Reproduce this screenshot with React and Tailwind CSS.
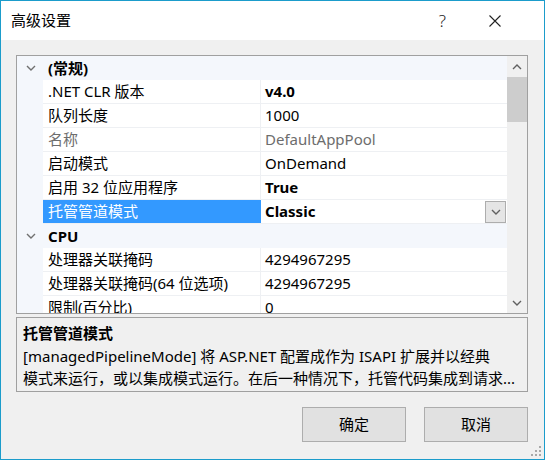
import React from "react";

const rows = [
  { cat: true, label: "(常规)" },
  { name: ".NET CLR 版本", value: "v4.0", bold: true },
  { name: "队列长度", value: "1000" },
  { name: "名称", value: "DefaultAppPool", gray: true },
  { name: "启动模式", value: "OnDemand" },
  { name: "启用 32 位应用程序", value: "True", bold: true },
  { name: "托管管道模式", value: "Classic", bold: true, selected: true },
  { cat: true, label: "CPU" },
  { name: "处理器关联掩码", value: "4294967295" },
  { name: "处理器关联掩码(64 位选项)", value: "4294967295" },
  { name: "限制(百分比)", value: "0" },
  { name: "限制操作", value: "NoAction" },
];

function Chevron({ up = false, className = "" }) {
  return (
    <svg width="10" height="6" viewBox="0 0 10 6" className={className}>
      <path
        d={up ? "M1 5 L5 1 L9 5" : "M1 1 L5 5 L9 1"}
        fill="none"
        stroke="currentColor"
        strokeWidth="1.4"
      />
    </svg>
  );
}

function CategoryRow({ label }) {
  return (
    <div className="flex h-[24px] items-center bg-[#f4f7fc]">
      <div className="flex w-[26px] justify-center pl-[1px] text-[#707070]">
        <Chevron />
      </div>
      <div className="pl-[5px] font-bold">{label}</div>
    </div>
  );
}

function PropRow({ row }) {
  return (
    <div className="flex h-[24px]">
      <div className="w-[26px] bg-[#f4f7fc]" />
      <div
        className={
          row.selected
            ? "flex w-[218px] items-center border-b border-[#eef0f3] bg-[#3399ff] pl-[5px] text-white"
            : "flex w-[218px] items-center border-b border-r border-[#eef0f3] pl-[5px]" +
              (row.gray ? " text-[#6d6d6d]" : "")
        }
      >
        <span className="whitespace-nowrap">{row.name}</span>
      </div>
      <div className="flex flex-1 items-center border-b border-[#eef0f3] pl-[4px]">
        <span
          className={
            (row.bold ? "font-bold " : "") +
            (row.gray ? "text-[#6d6d6d] " : "") +
            "whitespace-nowrap"
          }
        >
          {row.value}
        </span>
        {row.selected && (
          <div className="ml-auto mr-[1px] flex h-[22px] w-[21px] items-center justify-center border border-[#adadad] bg-[#e5e5e5] text-[#606060]">
            <Chevron />
          </div>
        )}
      </div>
    </div>
  );
}

export default function App() {
  return (
    <div className="h-[461px] w-[545px] bg-white font-['Noto_Sans','Noto_Sans_CJK_SC',sans-serif] text-[15px] text-black">
      <div className="relative flex h-[460px] w-[545px] flex-col border border-[#1b9ccb]">
        {/* title bar */}
        <div className="flex h-[39px] items-center bg-white pl-[10px] pr-[43px]">
          <span className="text-[15px]">高级设置</span>
          <div className="ml-auto flex items-center gap-[43px]">
            <span className="text-[17px] font-light text-[#222]">?</span>
            <svg width="12" height="12" viewBox="0 0 12 12">
              <path d="M0.5 0.5 L11.5 11.5 M11.5 0.5 L0.5 11.5" stroke="#222" strokeWidth="1.1" />
            </svg>
          </div>
        </div>

        {/* body */}
        <div className="flex flex-1 flex-col bg-[#f0f0f0] px-[15px] pt-[15px]">
          <div className="flex h-[259px] w-[512px] border border-[#a0a0a0] bg-white">
            <div className="flex-1 overflow-hidden">
              {rows.map((r, i) =>
                r.cat ? <CategoryRow key={i} label={r.label} /> : <PropRow key={i} row={r} />
              )}
            </div>
            <div className="flex w-[20px] flex-col bg-[#f0f0f0]">
              <div className="flex h-[21px] items-center justify-center text-[#606060]">
                <Chevron up />
              </div>
              <div className="h-[45px] bg-[#cdcdcd]" />
              <div className="flex-1" />
              <div className="flex h-[21px] items-center justify-center text-[#606060]">
                <Chevron />
              </div>
            </div>
          </div>

          <div className="mt-[3px] h-[75px] w-[512px] overflow-hidden border border-[#a0a0a0] bg-[#f0f0f0] pl-[6px] pt-[4px] leading-[22.5px]">
            <div className="font-bold">托管管道模式</div>
            <div className="whitespace-nowrap">
              [managedPipelineMode] 将 ASP.NET 配置成作为 ISAPI 扩展并以经典
            </div>
            <div className="whitespace-nowrap">
              模式来运行，或以集成模式运行。在后一种情况下，托管代码集成到请求...
            </div>
          </div>

          <div className="mt-[15px] flex justify-end gap-[18px] pr-[1px]">
            <button className="flex h-[35px] w-[104px] items-center justify-center border border-[#adadad] bg-[#e1e1e1]">
              确定
            </button>
            <button className="flex h-[35px] w-[104px] items-center justify-center border border-[#adadad] bg-[#e1e1e1]">
              取消
            </button>
          </div>
        </div>

        {/* size grip */}
        <svg width="10" height="10" viewBox="0 0 10 10" className="absolute bottom-[3px] right-[3px]">
          <rect x="8" y="0" width="2" height="2" fill="#a8a8a8" />
          <rect x="4" y="4" width="2" height="2" fill="#a8a8a8" />
          <rect x="8" y="4" width="2" height="2" fill="#a8a8a8" />
          <rect x="0" y="8" width="2" height="2" fill="#a8a8a8" />
          <rect x="4" y="8" width="2" height="2" fill="#a8a8a8" />
          <rect x="8" y="8" width="2" height="2" fill="#a8a8a8" />
        </svg>
      </div>
    </div>
  );
}
